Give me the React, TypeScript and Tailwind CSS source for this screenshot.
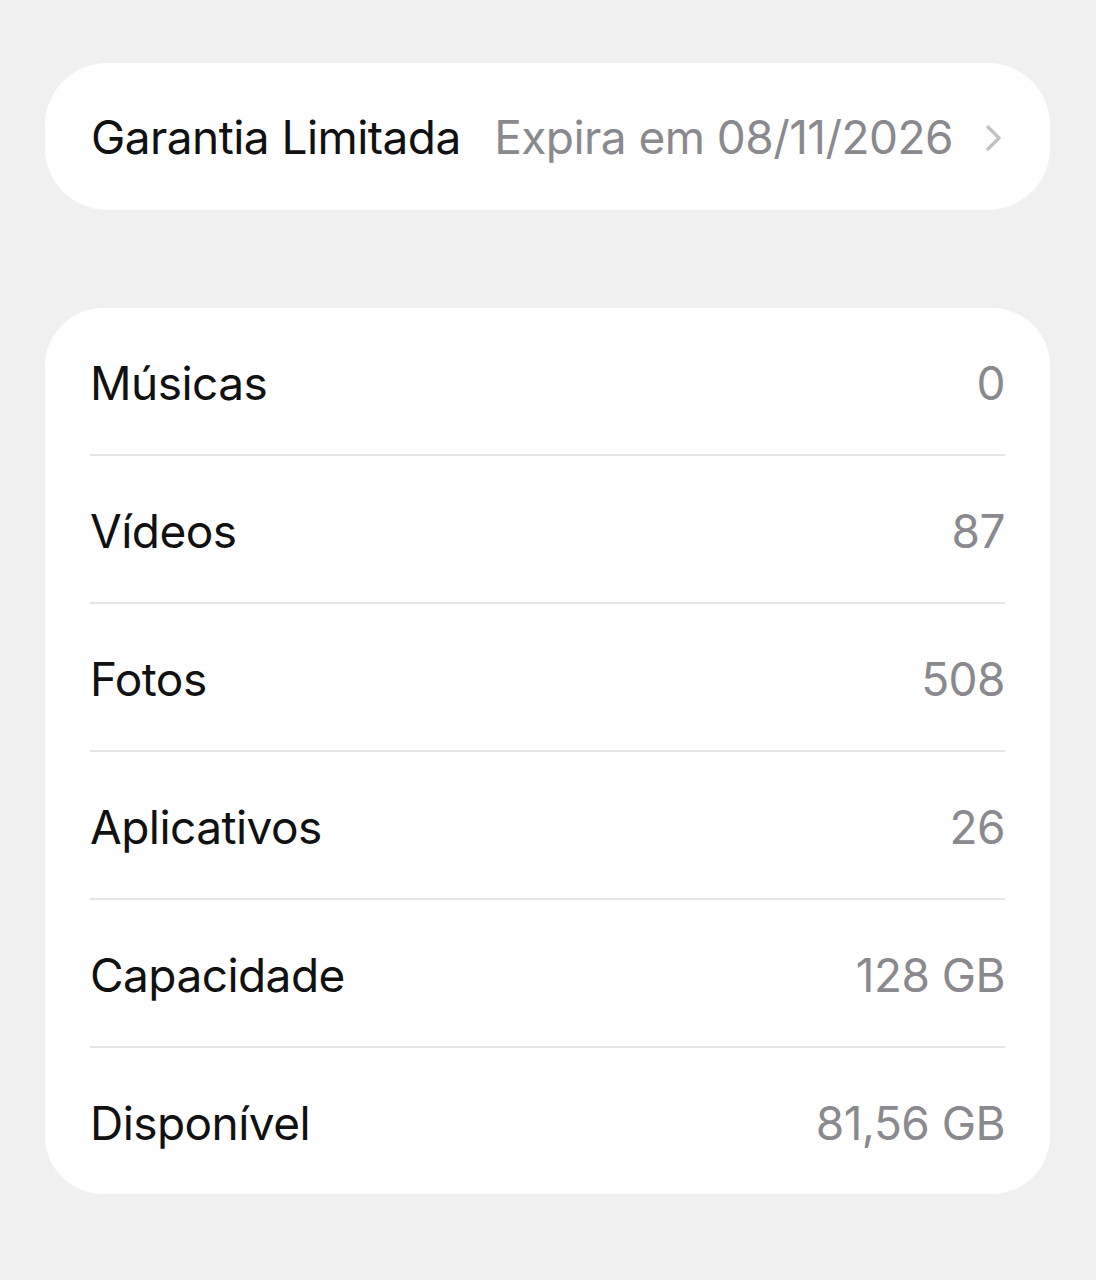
const rows: [string, string][] = [
  ["Músicas", "0"],
  ["Vídeos", "87"],
  ["Fotos", "508"],
  ["Aplicativos", "26"],
  ["Capacidade", "128 GB"],
  ["Disponível", "81,56 GB"],
];

const font = { fontFamily: "Inter, 'Liberation Sans', sans-serif" };

export default function App() {
  return (
    <div
      className="min-h-[1280px] w-full bg-[#f0f0f0] pl-[45px] pr-[46px] pt-[63px] text-[46px] tracking-[-0.012em]"
      style={font}
    >
      {/* Warranty row */}
      <div className="flex h-[147px] items-center rounded-[62px] bg-white pl-[46px] pr-[48px] pt-[2px]">
        <span className="text-[#111111]">Garantia Limitada</span>
        <span className="ml-auto text-[#8a8a8e]">Expira em 08/11/2026</span>
        <svg width="18" height="28" viewBox="0 0 18 28" className="ml-[31px]" fill="none">
          <path d="M4 3l11 11-11 11" stroke="#c2c2c6" strokeWidth="3.4" strokeLinecap="round" strokeLinejoin="round" />
        </svg>
      </div>

      {/* Stats list */}
      <div className="mt-[98px] rounded-[58px] bg-white px-[45px]">
        {rows.map(([label, value], i) => (
          <div key={label}>
            {i > 0 && <div className="h-[2px] bg-[#e6e6e8]" />}
            <div className="flex h-[146px] items-center justify-between pt-[4px]">
              <span className="text-[#111111]">{label}</span>
              <span className="text-[#8a8a8e]">{value}</span>
            </div>
          </div>
        ))}
      </div>
    </div>
  );
}
